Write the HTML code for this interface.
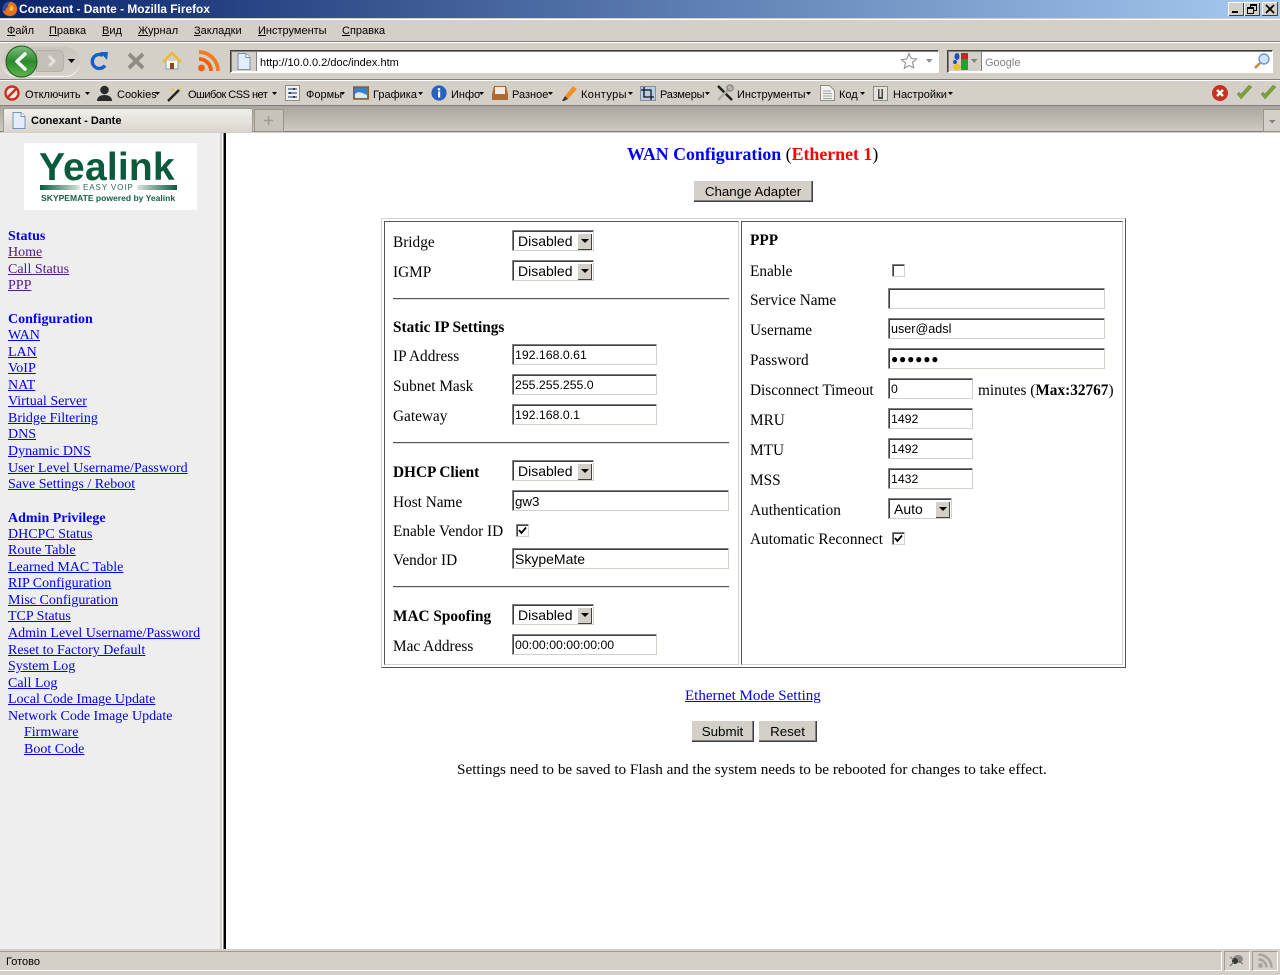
<!DOCTYPE html>
<html><head><meta charset="utf-8"><title>Conexant - Dante - Mozilla Firefox</title>
<style>
html,body{margin:0;padding:0;width:1280px;height:975px;overflow:hidden;background:#d4d0c8}
#r{position:relative;width:1280px;height:975px;overflow:hidden;font-family:"Liberation Sans",sans-serif;font-size:11px;color:#000}
.a,.t,.s,.l,.b,.i,.sel,.c,svg{position:absolute}
.t{white-space:nowrap;line-height:14px;font-size:11px}
.u{text-decoration:underline}
.s{font-family:"Liberation Serif",serif;font-size:15.3px;line-height:16px;margin-top:1px;white-space:nowrap;color:#000}
.l{font-family:"Liberation Serif",serif;font-size:14px;line-height:16px;margin-top:2px;white-space:nowrap;color:#00f;left:8px;text-decoration:underline}
.v{color:#551a8b}
.bo{font-weight:bold}
.i{box-sizing:border-box;height:21px;background:#fff;border:1px solid;border-color:#808080 #d4d0c8 #d4d0c8 #808080;box-shadow:inset 1px 1px 0 #404040,inset -1px -1px 0 #fff;font-size:12.3px;line-height:21px;padding-left:2px;white-space:nowrap;overflow:hidden}
.sel{box-sizing:border-box;height:21px;width:82px;background:#fff;border:1px solid;border-color:#808080 #d4d0c8 #d4d0c8 #808080;box-shadow:inset 1px 1px 0 #404040;font-size:14px;line-height:21px;padding-left:5px;white-space:nowrap}
.sel i{position:absolute;right:1px;top:2px;width:15px;height:17px;background:#d4d0c8;box-shadow:inset 1px 1px 0 #fff,inset -1px -1px 0 #404040}
.sel i:after{content:"";position:absolute;left:4px;top:6px;border:4px solid transparent;border-top:4px solid #000;border-bottom:0}
.b{box-sizing:border-box;background:#d4d0c8;font-size:13.33px;text-align:center;height:22px;line-height:23px;box-shadow:inset 1px 1px 0 #fff,inset -1px -1px 0 #404040,inset -2px -2px 0 #808080;white-space:nowrap}
.c{box-sizing:border-box;width:13px;height:13px;background:#fff;border:1px solid;border-color:#808080 #d4d0c8 #d4d0c8 #808080;box-shadow:inset 1px 1px 0 #404040}
.hr{position:absolute;left:393px;width:336px;height:1px;background:#555;box-shadow:0 1px 0 #ddd}
.wb{position:absolute;top:2px;width:16px;height:14px;background:#d4d0c8;box-shadow:inset 1px 1px 0 #fff,inset -1px -1px 0 #404040}
</style></head><body><div id="r">

<!-- title bar -->
<div class="a" style="left:0;top:0;width:1280px;height:18px;background:linear-gradient(90deg,#0a246a,#a6caf0)"></div>
<div class="a" style="left:0;top:18px;width:1280px;height:1px;background:#d4d0c8"></div>
<div class="a" style="left:0;top:19px;width:1280px;height:1px;background:#fff"></div>
<svg style="left:2px;top:1px" width="16" height="16" viewBox="0 0 16 16"><circle cx="8" cy="8" r="7.5" fill="#2b4f9e"/><path d="M8 1C12 1 15 4 15 8c0 4-3 7-7 7-4 0-7-2.500-7.500-6 1 1 2 1.500 3 1.500C3 9 4 7 6 6 5.500 4 7 2 8 1z" fill="#e8721c"/><path d="M9 4c2 1 3 3 2 5-1 1-3 1-4 0" fill="#f8c040"/></svg>
<div class="t" style="left:19px;top:2px;color:#fff;font-weight:bold;font-size:11.9px">Conexant - Dante - Mozilla Firefox</div>
<div class="wb" style="left:1228px"><div class="a" style="left:4px;top:9px;width:6px;height:2px;background:#000"></div></div>
<div class="wb" style="left:1244px"><div class="a" style="left:6px;top:2px;width:5px;height:4px;border:1px solid #000;border-top-width:2px"></div><div class="a" style="left:3px;top:5px;width:5px;height:4px;border:1px solid #000;border-top-width:2px;background:#d4d0c8"></div></div>
<svg style="left:1262px;top:2px" width="16" height="14" viewBox="0 0 16 14"><rect width="16" height="14" fill="#d4d0c8"/><path d="M0 14V0h16" fill="none" stroke="#fff" stroke-width="2"/><path d="M0 14h16V0" fill="none" stroke="#404040" stroke-width="2"/><path d="M4 3l8 8M12 3l-8 8" stroke="#000" stroke-width="1.800"/></svg>

<!-- menu -->
<div class="t" style="left:7px;top:24px"><span class="u">Ф</span>айл</div>
<div class="t" style="left:49px;top:24px"><span class="u">П</span>равка</div>
<div class="t" style="left:102px;top:24px"><span class="u">В</span>ид</div>
<div class="t" style="left:138px;top:24px"><span class="u">Ж</span>урнал</div>
<div class="t" style="left:194px;top:24px"><span class="u">З</span>акладки</div>
<div class="t" style="left:258px;top:24px"><span class="u">И</span>нструменты</div>
<div class="t" style="left:342px;top:24px"><span class="u">С</span>правка</div>
<div class="a" style="left:0;top:41px;width:1280px;height:1px;background:#808080"></div>
<div class="a" style="left:0;top:42px;width:1280px;height:1px;background:#fff"></div>

<!-- nav -->
<div class="a" style="left:2px;top:47px;width:78px;height:29px;border-radius:15px;background:linear-gradient(#c8c4bc,#d8d4cc);box-shadow:0 1px 0 #fff"></div>
<div class="a" style="left:36px;top:50px;width:28px;height:22px;border-radius:0 5px 5px 0;background:#c4c0b8;border:1px solid #b4b0a8;box-sizing:border-box"></div>
<svg style="left:5px;top:45px" width="34" height="33" viewBox="0 0 34 33"><defs><linearGradient id="g1" x1="0" y1="0" x2="0" y2="1"><stop offset="0" stop-color="#7fbf7f"/><stop offset=".5" stop-color="#2c8a2c"/><stop offset="1" stop-color="#5fb84f"/></linearGradient></defs><circle cx="16.500" cy="16.500" r="15.500" fill="url(#g1)" stroke="#1d5c1d"/><path d="M20 9l-8 7.500 8 7.500" fill="none" stroke="#fff" stroke-width="3.500" stroke-linecap="round" stroke-linejoin="round"/></svg>
<svg style="left:46px;top:54px" width="12" height="14" viewBox="0 0 12 14"><path d="M3 2l5 5-5 5" fill="none" stroke="#e4e1da" stroke-width="3"/></svg>
<svg style="left:68px;top:58px" width="8" height="6" viewBox="0 0 8 6"><path d="M0 1h7L3.500 5z" fill="#000"/></svg>
<svg style="left:90px;top:50px" width="20" height="21" viewBox="0 0 20 21"><path d="M15 15.500A7 7 0 1 1 13 5.500" fill="none" stroke="#1560c8" stroke-width="3.400"/><path d="M10 2l8 0-1 8z" fill="#1560c8"/></svg>
<svg style="left:126px;top:51px" width="20" height="20" viewBox="0 0 20 20"><path d="M3 3l14 14M17 3L3 17" stroke="#908c84" stroke-width="3.800"/></svg>
<svg style="left:162px;top:51px" width="20" height="20" viewBox="0 0 20 20"><path d="M4 10v8h12v-8" fill="#fdf6e0" stroke="#8aa0c0"/><path d="M1 11l9-9 9 9" fill="none" stroke="#f0b830" stroke-width="2.600"/><rect x="8" y="12" width="4" height="6" fill="#8a4a20"/></svg>
<svg style="left:197px;top:49px" width="24" height="24" viewBox="0 0 24 24"><circle cx="4.500" cy="19" r="3.400" fill="#f06010"/><path d="M2 10a12 12 0 0 1 12 12" fill="none" stroke="#f06010" stroke-width="3.800"/><path d="M2 3a19 19 0 0 1 19 19" fill="none" stroke="#f47a20" stroke-width="3.800"/></svg>

<!-- url bar -->
<div class="a" style="box-sizing:border-box;left:230px;top:50px;width:709px;height:23px;background:#fff;border:1px solid #fff;border-top:1px solid #404040;border-left:1px solid #404040;box-shadow:inset 1px 1px 0 #808080,0 0 0 0 #fff"></div>
<div class="a" style="left:232px;top:52px;width:24px;height:19px;background:#d4d0c8;border-right:1px solid #808080"></div>
<svg style="left:237px;top:53px" width="14" height="17" viewBox="0 0 14 17"><path d="M1 .5h8l4 4v12H1z" fill="#e4eefa" stroke="#7890b8"/><path d="M9 .5v4h4" fill="#fff" stroke="#7890b8"/></svg>
<div class="t" style="left:260px;top:55px;margin-top:1px">http://10.0.0.2/doc/index.htm</div>
<svg style="left:900px;top:52px" width="18" height="18" viewBox="0 0 18 18"><path d="M9 1.500l2.200 5 5.300.500-4 3.500 1.200 5.300L9 13.500l-4.700 2.800 1.200-5.300-4-3.500 5.300-.500z" fill="#fff" stroke="#909090" stroke-width="1.100"/></svg>
<svg style="left:926px;top:59px" width="7" height="5" viewBox="0 0 7 5"><path d="M0 0h6.500L3.200 4z" fill="#909090"/></svg>

<!-- search -->
<div class="a" style="box-sizing:border-box;left:947px;top:50px;width:326px;height:23px;background:#fff;border:1px solid #fff;border-top:1px solid #404040;border-left:1px solid #404040;box-shadow:inset 1px 1px 0 #808080"></div>
<div class="a" style="left:949px;top:52px;width:32px;height:19px;background:#d4d0c8;border-right:1px solid #808080"></div>
<svg style="left:952px;top:53px" width="17" height="17" viewBox="0 0 17 17"><rect x="9" y="0" width="7" height="7" fill="#d02020"/><rect x="9" y="6" width="7" height="11" fill="#20a030"/><ellipse cx="5" cy="3.500" rx="2.500" ry="3.500" fill="#2050c0"/><circle cx="3" cy="9" r="2" fill="#2050c0"/><ellipse cx="5" cy="14" rx="4" ry="3" fill="#f0c020"/></svg>
<svg style="left:971px;top:59px" width="7" height="5" viewBox="0 0 7 5"><path d="M0 0h6.500L3.200 4z" fill="#808080"/></svg>
<div class="t" style="left:985px;top:56px;color:#808080">Google</div>
<svg style="left:1253px;top:52px" width="18" height="18" viewBox="0 0 18 18"><circle cx="11" cy="7" r="5" fill="#cfe6fa" stroke="#6a9ad0" stroke-width="1.400"/><path d="M7 11l-5 5" stroke="#d08a40" stroke-width="2.600"/></svg>
<div class="a" style="left:0;top:79px;width:1280px;height:1px;background:#808080"></div>
<div class="a" style="left:0;top:80px;width:1280px;height:1px;background:#fff"></div>

<!-- web dev toolbar -->
<svg style="left:4px;top:85px" width="16" height="16" viewBox="0 0 16 16"><circle cx="8" cy="8" r="6.500" fill="#f4e8e0" stroke="#c83020" stroke-width="2.400"/><path d="M3.500 12.500l9-9" stroke="#c83020" stroke-width="2.400"/></svg>
<div class="t" style="left:25px;top:88px">Отключить</div>
<svg style="left:85px;top:92px" width="5" height="3"><path d="M0 0h5L2.500 3z"/></svg>
<svg style="left:96px;top:85px" width="17" height="16" viewBox="0 0 17 16"><circle cx="8.500" cy="5" r="4.300" fill="#2a2a2a"/><path d="M1 16c0-4 3-6 7.500-6s7.500 2 7.500 6z" fill="#2a2a2a"/></svg>
<div class="t" style="left:117px;top:88px">Cookies</div>
<svg style="left:155px;top:92px" width="5" height="3"><path d="M0 0h5L2.500 3z"/></svg>
<svg style="left:167px;top:85px" width="16" height="17" viewBox="0 0 16 17"><path d="M1 16L12 5" stroke="#222" stroke-width="2.400"/><path d="M5 2l1 2 2 .5-2 1-.5 2-1-2-2-.5 2-1z M13 1l.5 2 1.500.5-1.500.5-.5 2-.5-2L11 3.500l1.500-.5z" fill="#f0c840"/></svg>
<div class="t" style="left:188px;top:88px;letter-spacing:-.5px">Ошибок CSS нет</div>
<svg style="left:272px;top:92px" width="5" height="3"><path d="M0 0h5L2.500 3z"/></svg>
<svg style="left:285px;top:85px" width="16" height="16" viewBox="0 0 16 16"><rect x=".5" y=".5" width="14" height="15" fill="#f4f2ee" stroke="#908c84"/><path d="M3 4h9M3 8h9M3 12h9" stroke="#345a8a" stroke-width="1.200"/><path d="M9 3v2M5 7v2M9 11v2" stroke="#222" stroke-width="1.500"/></svg>
<div class="t" style="left:306px;top:88px">Формы</div>
<svg style="left:340px;top:92px" width="5" height="3"><path d="M0 0h5L2.500 3z"/></svg>
<svg style="left:353px;top:85px" width="16" height="16" viewBox="0 0 16 16"><rect x=".5" y="2" width="15" height="12" fill="#3a80c0" stroke="#8a5a20" stroke-width="1.400"/><path d="M2 9c3-3 6-2 12 1v3H2z" fill="#e0eaf4"/></svg>
<div class="t" style="left:373px;top:88px">Графика</div>
<svg style="left:418px;top:92px" width="5" height="3"><path d="M0 0h5L2.500 3z"/></svg>
<svg style="left:431px;top:85px" width="16" height="16" viewBox="0 0 16 16"><circle cx="8" cy="8" r="7.600" fill="#2a60c0"/><rect x="7" y="6.500" width="2.200" height="6" fill="#fff"/><circle cx="8" cy="4.300" r="1.300" fill="#fff"/></svg>
<div class="t" style="left:451px;top:88px">Инфо</div>
<svg style="left:479px;top:92px" width="5" height="3"><path d="M0 0h5L2.500 3z"/></svg>
<svg style="left:492px;top:85px" width="16" height="16" viewBox="0 0 16 16"><path d="M2 1h12l2 8v6H0V9z" fill="#b06a30"/><rect x="3" y="2" width="10" height="7" fill="#f0ece4"/></svg>
<div class="t" style="left:512px;top:88px">Разное</div>
<svg style="left:548px;top:92px" width="5" height="3"><path d="M0 0h5L2.500 3z"/></svg>
<svg style="left:561px;top:85px" width="17" height="17" viewBox="0 0 17 17"><path d="M4 11l8-10 4 3-9 10z" fill="#f09020"/><path d="M4 11l3 3-4 2-2 0z" fill="#3a3a30"/></svg>
<div class="t" style="left:581px;top:88px;letter-spacing:.4px">Контуры</div>
<svg style="left:628px;top:92px" width="5" height="3"><path d="M0 0h5L2.500 3z"/></svg>
<svg style="left:640px;top:86px" width="16" height="15" viewBox="0 0 16 15"><rect x=".5" y=".5" width="15" height="14" fill="#b8cce4" stroke="#8090a8"/><path d="M4 1v10h10M1 4h10v10" fill="none" stroke="#111" stroke-width="1.300"/></svg>
<div class="t" style="left:660px;top:88px;letter-spacing:-.2px">Размеры</div>
<svg style="left:705px;top:92px" width="5" height="3"><path d="M0 0h5L2.500 3z"/></svg>
<svg style="left:716px;top:84px" width="18" height="18" viewBox="0 0 18 18"><path d="M2 2l14 14" stroke="#222" stroke-width="2.600"/><path d="M16 2l-14 14" stroke="#b0aca4" stroke-width="2.400"/><circle cx="14" cy="4" r="3" fill="none" stroke="#888" stroke-width="1.600"/></svg>
<div class="t" style="left:737px;top:88px">Инструменты</div>
<svg style="left:806px;top:92px" width="5" height="3"><path d="M0 0h5L2.500 3z"/></svg>
<svg style="left:820px;top:85px" width="15" height="16" viewBox="0 0 15 16"><path d="M.5.500h9l5 5v10H.5z" fill="#f4f2ee" stroke="#908c84"/><path d="M3 6h8M3 8.500h9M3 11h9M3 13.500h9" stroke="#a0a0a0"/></svg>
<div class="t" style="left:839px;top:88px">Код</div>
<svg style="left:860px;top:92px" width="5" height="3"><path d="M0 0h5L2.500 3z"/></svg>
<svg style="left:873px;top:86px" width="15" height="15" viewBox="0 0 15 15"><rect x=".5" y=".5" width="14" height="14" fill="#e4e2dc" stroke="#908c84"/><rect x="5" y="3" width="5" height="10" fill="#444"/><rect x="6.500" y="3" width="2" height="8" fill="#ddd"/></svg>
<div class="t" style="left:893px;top:88px">Настройки</div>
<svg style="left:948px;top:92px" width="5" height="3"><path d="M0 0h5L2.500 3z"/></svg>
<svg style="left:1212px;top:85px" width="16" height="16" viewBox="0 0 16 16"><circle cx="8" cy="8" r="8" fill="#c83020"/><path d="M5 5l6 6M11 5l-6 6" stroke="#fff" stroke-width="2.400"/></svg>
<svg style="left:1236px;top:85px" width="16" height="15" viewBox="0 0 16 15"><path d="M1 9l4 5L16 2l-3-2-8 9-2-2z" fill="#7aa040" stroke="#6a8a3a" stroke-width=".5"/></svg>
<svg style="left:1260px;top:85px" width="16" height="15" viewBox="0 0 16 15"><path d="M1 9l4 5L16 2l-3-2-8 9-2-2z" fill="#7aa040" stroke="#6a8a3a" stroke-width=".5"/></svg>
<div class="a" style="left:0;top:105px;width:1280px;height:1px;background:#808080"></div>

<!-- tab bar -->
<div class="a" style="left:0;top:106px;width:1280px;height:26px;background:linear-gradient(#aaa69e,#cfcbc3)"></div>
<div class="a" style="left:0;top:131px;width:1280px;height:1px;background:#808080"></div>
<div class="a" style="box-sizing:border-box;left:3px;top:108px;width:250px;height:25px;background:linear-gradient(#f2f0ec,#d8d4cc);border:1px solid #a09c94;border-bottom:0;border-radius:3px 3px 0 0"></div>
<svg style="left:12px;top:112px" width="14" height="17" viewBox="0 0 14 17"><path d="M1 .5h8l4 4v12H1z" fill="#e4eefa" stroke="#7890b8"/><path d="M9 .5v4h4" fill="#fff" stroke="#7890b8"/></svg>
<div class="t" style="left:31px;top:114px;font-weight:bold">Conexant - Dante</div>
<div class="a" style="box-sizing:border-box;left:254px;top:109px;width:30px;height:23px;background:#c8c4bc;border:1px solid #989488;border-radius:2px 2px 0 0"></div>
<svg style="left:264px;top:116px" width="9" height="9" viewBox="0 0 9 9"><path d="M4.500 0v9M0 4.500h9" stroke="#a09c94" stroke-width="1.600"/></svg>
<div class="a" style="box-sizing:border-box;left:1263px;top:109px;width:20px;height:23px;background:#d4d0c8;border:1px solid #989488"></div>
<svg style="left:1269px;top:120px" width="7" height="4" viewBox="0 0 7 4"><path d="M0 0h6.500L3.200 3.500z" fill="#808080"/></svg>

<!-- page -->
<div class="a" style="left:0;top:133px;width:222px;height:816px;background:#eeeeee"></div>
<div class="a" style="left:220px;top:133px;width:2px;height:816px;background:#d4d0c8"></div>
<div class="a" style="left:222px;top:133px;width:1px;height:816px;background:#fff"></div>
<div class="a" style="left:223px;top:133px;width:1px;height:816px;background:#808080"></div>
<div class="a" style="left:224px;top:133px;width:2px;height:816px;background:#000"></div>
<div class="a" style="left:226px;top:133px;width:1054px;height:816px;background:#fff"></div>
<div class="a" style="left:0;top:132px;width:1280px;height:1px;background:#d4d0c8"></div>

<!-- logo -->
<div class="a" style="left:24px;top:143px;width:173px;height:67px;background:#fff"></div>
<div class="a" style="left:39px;top:148px;font-size:39px;line-height:40px;font-weight:bold;color:#0a5a3c;letter-spacing:.2px;white-space:nowrap">Yealink</div>
<div class="a" style="left:40px;top:185px;width:137px;height:5px;background:linear-gradient(90deg,#0a5a3c 0,#cfe0d6 28%,#fff 30%,#fff 70%,#cfe0d6 72%,#0a5a3c 100%)"></div>
<div class="a" style="left:83px;top:183px;font-size:8px;line-height:9px;color:#2a6a50;white-space:nowrap;letter-spacing:.9px">EASY VOIP</div>
<div class="a" style="left:41px;top:193px;font-size:8.55px;line-height:11px;font-weight:bold;color:#1a6048;white-space:nowrap">SKYPEMATE powered by Yealink</div>

<!-- sidebar -->
<div class="l bo" style="top:227px;text-decoration:none">Status</div>
<div class="l v" style="top:243px">Home</div>
<div class="l v" style="top:260px">Call Status</div>
<div class="l v" style="top:276px">PPP</div>
<div class="l bo" style="top:310px;text-decoration:none">Configuration</div>
<div class="l" style="top:326px">WAN</div>
<div class="l" style="top:343px">LAN</div>
<div class="l" style="top:359px">VoIP</div>
<div class="l" style="top:376px">NAT</div>
<div class="l" style="top:392px">Virtual Server</div>
<div class="l" style="top:409px">Bridge Filtering</div>
<div class="l" style="top:425px">DNS</div>
<div class="l" style="top:442px">Dynamic DNS</div>
<div class="l" style="top:459px">User Level Username/Password</div>
<div class="l" style="top:475px">Save Settings / Reboot</div>
<div class="l bo" style="top:509px;text-decoration:none">Admin Privilege</div>
<div class="l" style="top:525px">DHCPC Status</div>
<div class="l" style="top:541px">Route Table</div>
<div class="l" style="top:558px">Learned MAC Table</div>
<div class="l" style="top:574px">RIP Configuration</div>
<div class="l" style="top:591px">Misc Configuration</div>
<div class="l" style="top:607px">TCP Status</div>
<div class="l" style="top:624px">Admin Level Username/Password</div>
<div class="l" style="top:641px">Reset to Factory Default</div>
<div class="l" style="top:657px">System Log</div>
<div class="l" style="top:674px">Call Log</div>
<div class="l" style="top:690px">Local Code Image Update</div>
<div class="l" style="top:707px;text-decoration:none">Network Code Image Update</div>
<div class="l" style="top:723px;left:24px">Firmware</div>
<div class="l" style="top:740px;left:24px">Boot Code</div>

<!-- heading -->
<div class="s" style="left:627px;top:145px;font-size:17.85px;line-height:18px;margin-top:0"><b style="color:#00f">WAN Configuration</b> (<b style="color:#f00">Ethernet 1</b>)</div>
<div class="b" style="left:693px;top:180px;width:120px">Change Adapter</div>

<!-- table -->
<div class="a" style="box-sizing:border-box;left:381px;top:218px;width:745px;height:450px;border:1px solid;border-color:#d0d0d0 #555 #555 #d0d0d0"></div>
<div class="a" style="box-sizing:border-box;left:384px;top:221px;width:355px;height:444px;border:1px solid;border-color:#555 #d0d0d0 #d0d0d0 #555"></div>
<div class="a" style="box-sizing:border-box;left:741px;top:221px;width:382px;height:444px;border:1px solid;border-color:#555 #d0d0d0 #d0d0d0 #555"></div>

<!-- left cell -->
<div class="s" style="left:393px;top:234px">Bridge</div>
<div class="sel" style="left:512px;top:230px">Disabled<i></i></div>
<div class="s" style="left:393px;top:264px">IGMP</div>
<div class="sel" style="left:512px;top:260px">Disabled<i></i></div>
<div class="hr" style="top:298px"></div>
<div class="s bo" style="left:393px;top:319px">Static IP Settings</div>
<div class="s" style="left:393px;top:348px">IP Address</div>
<div class="i" style="left:512px;top:344px;width:145px">192.168.0.61</div>
<div class="s" style="left:393px;top:378px">Subnet Mask</div>
<div class="i" style="left:512px;top:374px;width:145px">255.255.255.0</div>
<div class="s" style="left:393px;top:408px">Gateway</div>
<div class="i" style="left:512px;top:404px;width:145px">192.168.0.1</div>
<div class="hr" style="top:442px"></div>
<div class="s bo" style="left:393px;top:464px">DHCP Client</div>
<div class="sel" style="left:512px;top:460px">Disabled<i></i></div>
<div class="s" style="left:393px;top:494px">Host Name</div>
<div class="i" style="left:512px;top:490px;width:217px;font-size:13.33px">gw3</div>
<div class="s" style="left:393px;top:523px">Enable Vendor ID</div>
<div class="c" style="left:516px;top:524px"></div>
<svg style="left:517px;top:525px" width="11" height="11" viewBox="0 0 11 11"><path d="M2 5l2.500 3L9 2.500" fill="none" stroke="#000" stroke-width="1.800"/></svg>
<div class="s" style="left:393px;top:552px">Vendor ID</div>
<div class="i" style="left:512px;top:548px;width:217px;font-size:14px">SkypeMate</div>
<div class="hr" style="top:586px"></div>
<div class="s bo" style="left:393px;top:608px">MAC Spoofing</div>
<div class="sel" style="left:512px;top:604px">Disabled<i></i></div>
<div class="s" style="left:393px;top:638px">Mac Address</div>
<div class="i" style="left:512px;top:634px;width:145px">00:00:00:00:00:00</div>

<!-- right cell -->
<div class="s bo" style="left:750px;top:233px;margin-top:0">PPP</div>
<div class="s" style="left:750px;top:263px">Enable</div>
<div class="c" style="left:892px;top:264px"></div>
<div class="s" style="left:750px;top:292px">Service Name</div>
<div class="i" style="left:888px;top:288px;width:217px"></div>
<div class="s" style="left:750px;top:322px">Username</div>
<div class="i" style="left:888px;top:318px;width:217px;font-size:12.6px">user@adsl</div>
<div class="s" style="left:750px;top:352px">Password</div>
<div class="i" style="left:888px;top:348px;width:217px;font-size:12px;letter-spacing:.8px">●●●●●●</div>
<div class="s" style="left:750px;top:382px">Disconnect Timeout</div>
<div class="i" style="left:888px;top:378px;width:85px">0</div>
<div class="s" style="left:978px;top:382px">minutes (<b>Max:32767</b>)</div>
<div class="s" style="left:750px;top:412px">MRU</div>
<div class="i" style="left:888px;top:408px;width:85px">1492</div>
<div class="s" style="left:750px;top:442px">MTU</div>
<div class="i" style="left:888px;top:438px;width:85px">1492</div>
<div class="s" style="left:750px;top:472px">MSS</div>
<div class="i" style="left:888px;top:468px;width:85px">1432</div>
<div class="s" style="left:750px;top:502px">Authentication</div>
<div class="sel" style="left:888px;top:498px;width:64px">Auto<i></i></div>
<div class="s" style="left:750px;top:531px">Automatic Reconnect</div>
<div class="c" style="left:892px;top:532px"></div>
<svg style="left:893px;top:533px" width="11" height="11" viewBox="0 0 11 11"><path d="M2 5l2.500 3L9 2.500" fill="none" stroke="#000" stroke-width="1.800"/></svg>

<!-- bottom -->
<div class="l" style="left:685px;top:687px;font-size:15px;margin-top:1px">Ethernet Mode Setting</div>
<div class="b" style="left:691px;top:720px;width:63px">Submit</div>
<div class="b" style="left:758px;top:720px;width:59px">Reset</div>
<div class="s" style="left:457px;top:761px;font-size:15.2px">Settings need to be saved to Flash and the system needs to be rebooted for changes to take effect.</div>

<!-- status bar -->
<div class="a" style="left:0;top:949px;width:1280px;height:26px;background:#d4d0c8"></div>
<div class="a" style="box-sizing:border-box;left:0;top:951px;width:1222px;height:20px;border-top:1px solid #a09c94;border-bottom:1px solid #fff;border-right:1px solid #fff"></div>
<div class="t" style="left:6px;top:955px">Готово</div>
<div class="a" style="box-sizing:border-box;left:1224px;top:951px;width:26px;height:20px;border:1px solid;border-color:#a09c94 #fff #fff #a09c94"></div>
<div class="a" style="box-sizing:border-box;left:1252px;top:951px;width:26px;height:20px;border:1px solid;border-color:#a09c94 #fff #fff #a09c94"></div>
<svg style="left:1229px;top:953px" width="16" height="15" viewBox="0 0 16 15"><ellipse cx="9" cy="6" rx="5" ry="4" fill="#8a8a8a"/><circle cx="6" cy="8" r="3" fill="#333"/><path d="M1 4l4 3M1 13l4-4M14 11l-4-3" stroke="#666"/></svg>
<svg style="left:1257px;top:953px" width="17" height="16" viewBox="0 0 17 16"><circle cx="3.500" cy="12.500" r="2.400" fill="#a8a49c"/><path d="M1.500 6.500a8 8 0 0 1 8 8" fill="none" stroke="#a8a49c" stroke-width="2.400"/><path d="M1.500 1.500a13 13 0 0 1 13 13" fill="none" stroke="#a8a49c" stroke-width="2.400"/></svg>
</div></body></html>
